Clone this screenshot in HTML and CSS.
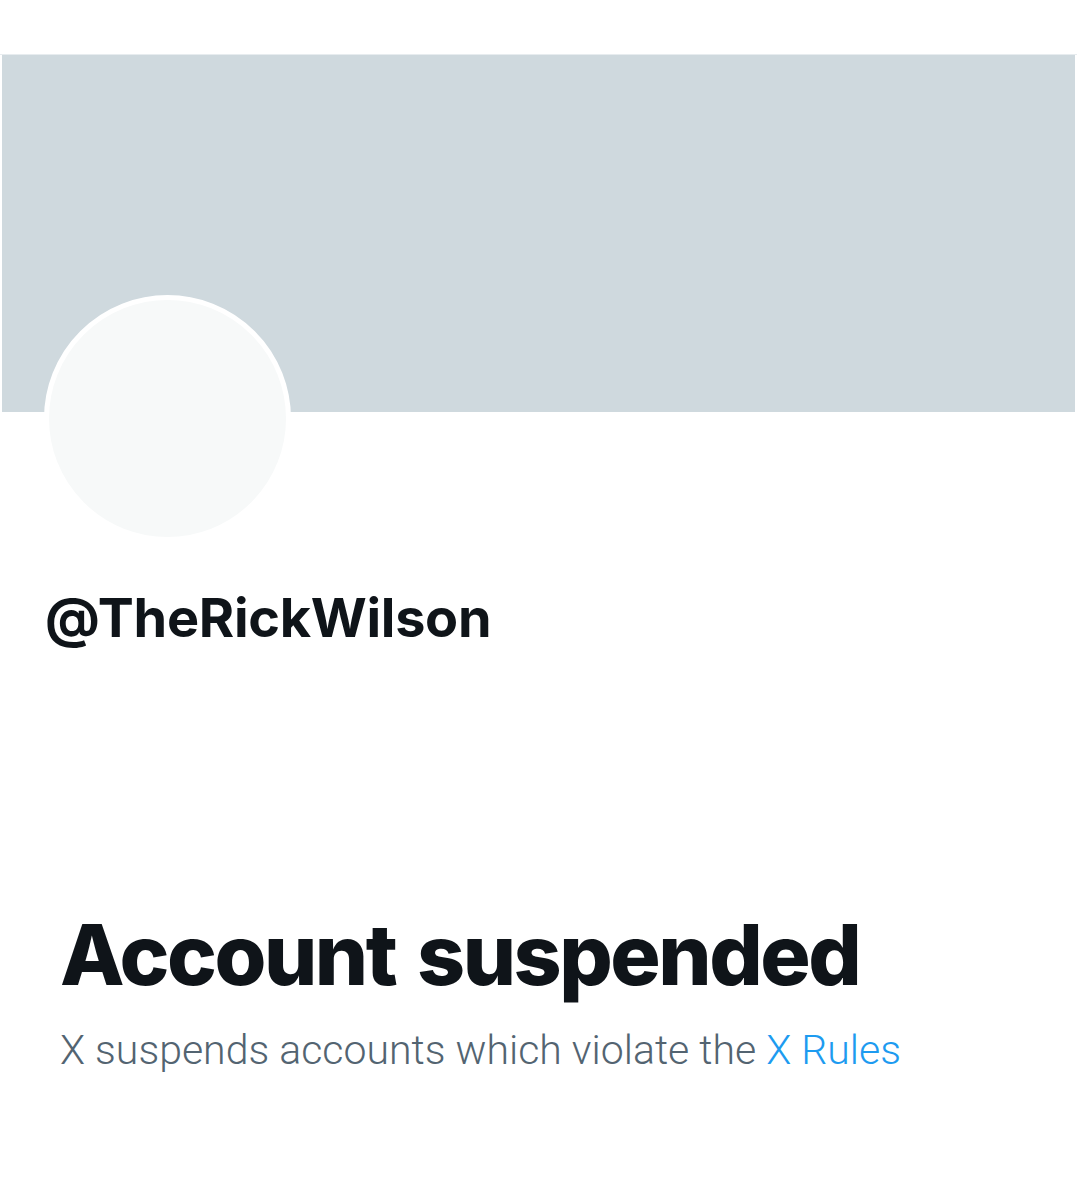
FILE: index.html
```html
<!DOCTYPE html>
<html>
<head>
<meta charset="utf-8">
<link rel="stylesheet" href="styles.css">
</head>
<body>
<div class="page">
  <div class="topbar"></div>
  <div class="banner"></div>
  <div class="profile">
    <div class="avatar"></div>
    <div class="handle">@TheRickWilson</div>
  </div>
  <div class="notice">
    <h1 class="title">Account suspended</h1>
    <p class="desc">X suspends accounts which violate the <a class="link" href="#">X Rules</a></p>
  </div>
</div>
</body>
</html>
```
FILE: styles.css
```css
html, body {
  margin: 0;
  padding: 0;
  background: #ffffff;
}
.page {
  width: 1077px;
  font-family: "Inter", "Open Sans", sans-serif;
  color: #0f1419;
}
.topbar {
  height: 54px;
  border-bottom: 1px solid #e7ecef;
}
.banner {
  height: 357px;
  margin: 0 2px;
  background: #cfd9de;
}
.profile {
  display: flex;
  flex-direction: column;
  align-items: flex-start;
  padding: 0 0 0 44px;
}
.avatar {
  width: 237px;
  height: 237px;
  margin-top: -117px;
  border-radius: 50%;
  background: #f7f9f9;
  border: 5px solid #ffffff;
}
.handle {
  margin-top: 46px;
  padding-left: 1px;
  font-size: 54px;
  font-weight: 700;
  line-height: 60px;
  letter-spacing: -0.3px;
}
.notice {
  padding: 257px 0 0 60px;
}
.title {
  margin: 0;
  font-size: 84px;
  font-weight: 800;
  line-height: 100px;
  letter-spacing: -2.5px;
  word-spacing: 6px;
}
.desc {
  margin: 21px 0 0;
  font-family: "Roboto", sans-serif;
  font-size: 41px;
  font-weight: 300;
  color: #536471;
  line-height: 48px;
}
.link {
  color: #1d9bf0;
  text-decoration: none;
}
```
